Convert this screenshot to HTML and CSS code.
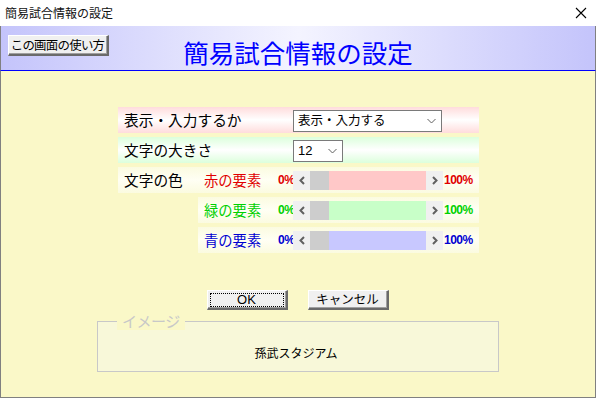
FILE: index.html
```html
<!DOCTYPE html>
<html lang="ja">
<head>
<meta charset="utf-8">
<link rel="stylesheet" href="styles.css">
</head>
<body>
<div class="window">
  <div class="titlebar">
    <span class="title-text">簡易試合情報の設定</span>
    <svg class="close" width="12" height="12" viewBox="0 0 12 12"><path d="M1 1 L11 11 M11 1 L1 11" stroke="#000" stroke-width="1.1" fill="none"/></svg>
  </div>
  <div class="header">
    <div class="help-cell"><button class="btn help">この画面の使い方</button></div>
    <div class="big-title">簡易試合情報の設定</div>
    <div></div>
  </div>
  <div class="content">
    <div class="rows">
      <div class="row pink">
        <div class="label">表示・入力するか</div>
        <div class="select wide"><span>表示・入力する</span><svg width="9" height="6" viewBox="0 0 9 6"><path d="M0.5 1 L4.5 5 L8.5 1" stroke="#606060" fill="none"/></svg></div>
      </div>
      <div class="row green">
        <div class="label">文字の大きさ</div>
        <div class="select narrow"><span>12</span><svg width="9" height="6" viewBox="0 0 9 6"><path d="M0.5 1 L4.5 5 L8.5 1" stroke="#606060" fill="none"/></svg></div>
      </div>
      <div class="row pale">
        <div class="label short">文字の色</div>
        <div class="sub red">
          <div class="sublabel">赤の要素</div>
          <div class="pct lo">0%</div>
          <div class="scroll">
            <div class="arrow"><svg width="6" height="9" viewBox="0 0 6 9"><path d="M5 1 L1.5 4.5 L5 8" stroke="#606060" stroke-width="2" fill="none"/></svg></div>
            <div class="thumb"></div>
            <div class="track"></div>
            <div class="arrow"><svg width="6" height="9" viewBox="0 0 6 9"><path d="M1 1 L4.5 4.5 L1 8" stroke="#606060" stroke-width="2" fill="none"/></svg></div>
          </div>
          <div class="pct hi">100%</div>
        </div>
      </div>
      <div class="row pale sub-row">
        <div class="sub grn">
          <div class="sublabel">緑の要素</div>
          <div class="pct lo">0%</div>
          <div class="scroll">
            <div class="arrow"><svg width="6" height="9" viewBox="0 0 6 9"><path d="M5 1 L1.5 4.5 L5 8" stroke="#606060" stroke-width="2" fill="none"/></svg></div>
            <div class="thumb"></div>
            <div class="track"></div>
            <div class="arrow"><svg width="6" height="9" viewBox="0 0 6 9"><path d="M1 1 L4.5 4.5 L1 8" stroke="#606060" stroke-width="2" fill="none"/></svg></div>
          </div>
          <div class="pct hi">100%</div>
        </div>
      </div>
      <div class="row pale sub-row">
        <div class="sub blu">
          <div class="sublabel">青の要素</div>
          <div class="pct lo">0%</div>
          <div class="scroll">
            <div class="arrow"><svg width="6" height="9" viewBox="0 0 6 9"><path d="M5 1 L1.5 4.5 L5 8" stroke="#606060" stroke-width="2" fill="none"/></svg></div>
            <div class="thumb"></div>
            <div class="track"></div>
            <div class="arrow"><svg width="6" height="9" viewBox="0 0 6 9"><path d="M1 1 L4.5 4.5 L1 8" stroke="#606060" stroke-width="2" fill="none"/></svg></div>
          </div>
          <div class="pct hi">100%</div>
        </div>
      </div>
    </div>
    <div class="buttons">
      <button class="btn action ok"><span class="focus">OK</span></button>
      <button class="btn action">キャンセル</button>
    </div>
    <div class="group">
      <span class="legend">イメージ</span>
      <div class="preview">孫武スタジアム</div>
    </div>
  </div>
</div>
</body>
</html>
```

FILE: styles.css
```css
* { box-sizing: border-box; }
html, body { margin: 0; padding: 0; }
body {
  width: 596px;
  height: 398px;
  overflow: hidden;
  font-family: "Noto Sans CJK JP", "Liberation Sans", sans-serif;
  background: #faf8c8;
}
.window {
  width: 596px;
  height: 398px;
  display: flex;
  flex-direction: column;
}
.titlebar {
  height: 26px;
  background: #ffffff;
  display: flex;
  align-items: center;
  justify-content: space-between;
  padding: 0 9px 0 5px;
}
.title-text {
  font-size: 12px;
  color: #111;
  line-height: 1;
}
.close { display: block; }
.header {
  height: 45px;
  border-left: 1px solid #808080;
  border-right: 1px solid #808080;
  border-bottom: 1px solid #0000ff;
  background: linear-gradient(to right, #c4c4fb 0%, #f4f4ff 50%, #c4c4fb 100%);
  display: grid;
  grid-template-columns: 1fr auto 1fr;
  align-items: start;
}
.help-cell { padding: 9px 0 0 7px; }
.btn {
  font-family: "Noto Sans CJK JP", "Liberation Sans", sans-serif;
  background: #f0f0f0;
  color: #000;
  border-style: solid;
  border-width: 1px 2px 2px 1px;
  border-color: #ffffff #6a6a6a #6a6a6a #ffffff;
  box-shadow: inset -1px -1px 0 #a0a0a0;
  margin: 0;
  padding: 0;
  display: flex;
  align-items: center;
  justify-content: center;
}
.help {
  width: 101px;
  height: 21px;
  font-size: 12.4px;
  line-height: 1;
  letter-spacing: -0.7px;
  padding-right: 1px;
}
.big-title {
  font-size: 25.5px;
  color: #0000ff;
  line-height: 1;
  padding-top: 13px;
  white-space: nowrap;
}
.content {
  flex: 1;
  border-left: 1px solid #808080;
  border-right: 1px solid #808080;
  border-bottom: 1px solid #808080;
  background: #faf8c8;
  padding-top: 36px;
  display: flex;
  flex-direction: column;
}
.rows {
  margin-left: 117px;
  width: 361px;
  display: flex;
  flex-direction: column;
  gap: 4px;
}
.row {
  height: 26px;
  display: flex;
  align-items: center;
}
.pink { background: linear-gradient(to bottom, #ffdcdc 0%, #ffffff 50%, #ffdcdc 100%); }
.green { background: linear-gradient(to bottom, #dcffdc 0%, #ffffff 50%, #dcffdc 100%); }
.pale { background: linear-gradient(to bottom, #fbfbe0 0%, #fffff4 50%, #fbfbe0 100%); }
.label {
  width: 175px;
  padding-left: 6px;
  font-size: 14.7px;
  line-height: 1;
  color: #000;
  white-space: nowrap;
}
.label.short { width: 80px; }
.select {
  height: 22px;
  background: #fff;
  border: 1px solid #7a7a7a;
  display: flex;
  align-items: center;
  justify-content: space-between;
  padding: 0 5px 0 4px;
  font-size: 12.5px;
  line-height: 1;
  color: #000;
  margin-top: 1px;
}
.select.wide { width: 149px; }
.select.narrow { width: 50px; }
.select.narrow span { font-family: "Liberation Sans", sans-serif; font-size: 13px; }
.select svg { display: block; }
.sub-row { margin-left: 80px; width: 281px; }
.sub {
  display: flex;
  align-items: center;
  height: 26px;
  padding-left: 6px;
}
.sublabel {
  width: 74px;
  font-size: 14.3px;
  line-height: 1;
  white-space: nowrap;
}
.pct {
  font-family: "Liberation Sans", sans-serif;
  font-weight: bold;
  font-size: 12px;
  line-height: 1;
  letter-spacing: -0.5px;
}
.pct.lo { width: 15px; }
.pct.hi { padding-left: 1px; }
.red { color: #e00000; }
.grn { color: #00d000; }
.blu { color: #0000d0; }
.scroll {
  width: 150px;
  height: 19px;
  display: flex;
}
.arrow {
  width: 17px;
  background: #f0f0f0;
  display: flex;
  align-items: center;
  justify-content: center;
}
.arrow svg { display: block; }
.thumb { width: 19px; background: #cdcdcd; }
.track { flex: 1; }
.red .track { background: #ffc8c8; }
.grn .track { background: #c8ffc8; }
.blu .track { background: #c8c8ff; }
.buttons {
  margin-top: 37px;
  display: flex;
  justify-content: center;
  gap: 20px;
  padding-right: 1px;
}
.action {
  width: 81px;
  height: 20px;
  font-size: 12.5px;
  line-height: 1;
}
.ok .focus {
  display: flex;
  align-items: center;
  justify-content: center;
  width: 74px;
  height: 14px;
  border: 1px dotted #000;
  font-family: "Liberation Sans", sans-serif;
  font-size: 13px;
}
.group {
  position: relative;
  margin: 11px auto 0;
  width: 402px;
  height: 51px;
  border: 1px solid #c8c8c8;
  background: #f8f8d9;
}
.legend {
  position: absolute;
  top: -10px;
  left: 19px;
  padding: 0 5px;
  background: #faf8c8;
  color: #c8c8c8;
  font-size: 15px;
  line-height: 18px;
  letter-spacing: -0.5px;
}
.preview {
  text-align: center;
  font-size: 12px;
  line-height: 1;
  color: #000;
  padding-top: 25px;
  padding-right: 4px;
}
```
